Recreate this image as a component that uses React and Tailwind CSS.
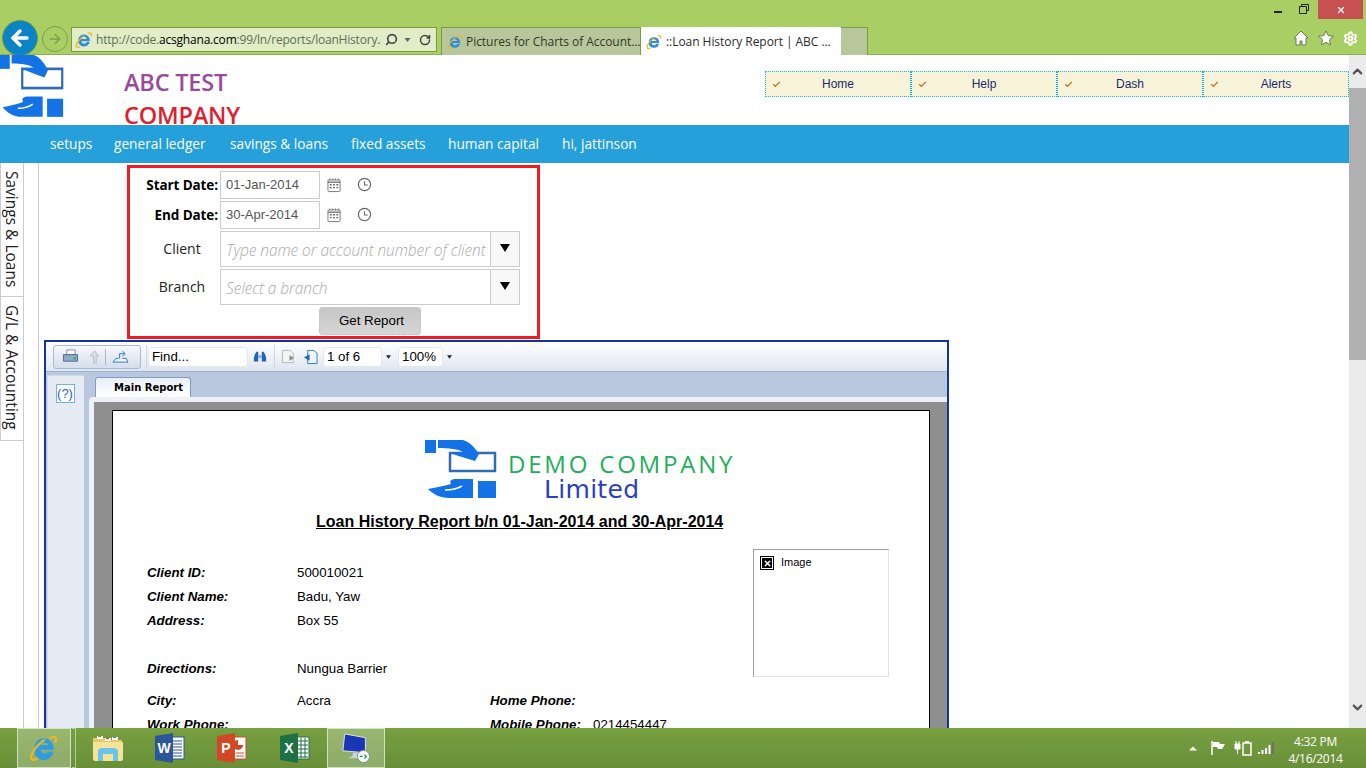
import React from 'react';
import { Settings, Check, Search, RotateCw, ArrowLeft, ArrowRight, X, ChevronUp, ChevronDown } from 'lucide-react';

const navItems = [
  { label: 'setups', cls: 'w-[64px]' },
  { label: 'general ledger', cls: 'w-[116px]' },
  { label: 'savings & loans', cls: 'w-[121px]' },
  { label: 'fixed assets', cls: 'w-[97px]' },
  { label: 'human capital', cls: 'w-[114px]' },
  { label: 'hi, jattinson', cls: 'w-[90px]' },
];

const detailRows = [
  { label: 'Client ID:', value: '500010021', cls: 'h-[24px]' },
  { label: 'Client Name:', value: 'Badu, Yaw', cls: 'h-[24px]' },
  { label: 'Address:', value: 'Box 55', cls: 'h-[48px]' },
  { label: 'Directions:', value: 'Nungua Barrier', cls: 'h-[32px]' },
];

function IeIcon({ className }) {
  return (
    <svg viewBox="0 0 20 20" className={className}>
      <path d="M3.5 10.5a6.5 6.5 0 0 1 12.9-1.2l.1 2H7a3.2 3.2 0 0 0 6 1h3.3a6.5 6.5 0 0 1-12.8-1.8z M7 8.8h6a3.1 3.1 0 0 0-6 0z" fill="#2f8fdc" fillRule="evenodd" />
      <path d="M15 2.5c2.5-1.2 4 0 2.8 3M5 17.5c-2.8 1.5-4.5.3-3.3-2.8 1.1-2.8 4-6 8-9" fill="none" stroke="#f2b51d" strokeWidth="1.5" strokeLinecap="round" />
    </svg>
  );
}

// hands and box logo, used in the header and on the report
function HandsLogo({ className }) {
  return (
    <svg viewBox="0 0 72 60" preserveAspectRatio="none" className={className}>
      <rect x="0" y="0" width="11" height="13" fill="#1272e6" />
      <rect x="25" y="13" width="45" height="18" fill="#fff" stroke="#2f6cb5" strokeWidth="2.5" />
      <path d="M13 0H38C45 2 50 8 54 14L50 21L37 17C31 15 27 14 24 12C30 13 35 13 38 12C33 9 24 8 13 8Z" fill="#1272e6" />
      <path d="M3 49C12 47 20 46 26 44C24 41 26 39 32 39H48V58H24C15 58 8 54 3 49Z" fill="#1272e6" />
      <path d="M20 50C26 50 32 49 37 46" fill="none" stroke="#fff" strokeWidth="1.5" />
      <rect x="53" y="41" width="18" height="17" fill="#1272e6" />
    </svg>
  );
}

function CalendarIcon() {
  return (
    <svg viewBox="0 0 16 16" className="w-[15px] h-[16px]">
      <rect x="1" y="2.5" width="13" height="12.5" rx="1" fill="#fff" stroke="#777" />
      <path d="M1 5h13" stroke="#777" strokeWidth="1.5" />
      <path d="M3 1v2M6 1v2M9 1v2M12 1v2" stroke="#777" />
      <path d="M3 7h2v1.5H3zM6.5 7h2v1.5h-2zM10 7h2v1.5h-2zM3 10h2v1.5H3zM6.5 10h2v1.5h-2zM10 10h2v1.5h-2z" fill="#666" />
    </svg>
  );
}

function ClockIcon() {
  return (
    <svg viewBox="0 0 16 16" className="w-[15px] h-[15px]">
      <circle cx="8" cy="8" r="6.5" fill="none" stroke="#666" strokeWidth="1.3" />
      <path d="M8 4.5V8.5H11.5" fill="none" stroke="#666" strokeWidth="1.1" />
    </svg>
  );
}

function DropArrow() {
  return (
    <div className="w-[29px] h-full border-l border-[#cccccc] bg-[#f8f8f8] flex items-center justify-center pb-[2px]">
      <svg viewBox="0 0 10 8" className="w-[10px] h-[8px]"><path d="M0 0h10L5 8z" fill="#000" /></svg>
    </div>
  );
}

function DateRow({ label, value }) {
  return (
    <div className="flex items-center h-[28px]">
      <div className="w-[90px] text-right font-['Open_Sans',sans-serif] font-bold text-[13.5px] text-black pr-[2px] tracking-[-0.1px]">{label}</div>
      <div className="w-[100px] h-[28px] border border-[#cccccc] flex items-center pl-[5px] font-['Liberation_Sans',sans-serif] text-[13px] text-[#555555] pb-[1px]">{value}</div>
      <div className="ml-[7px] pb-[1px]"><CalendarIcon /></div>
      <div className="ml-[15px] pb-[2px]"><ClockIcon /></div>
    </div>
  );
}

function ComboRow({ label, placeholder }) {
  return (
    <div className="flex h-[36px]">
      <div className="w-[90px] flex justify-center pl-[14px] pt-[7px] font-['Open_Sans',sans-serif] text-[14px] text-[#222222]">{label}</div>
      <div className="w-[300px] border border-[#cccccc] flex">
        <div className="flex-1 pl-[5px] pt-[8px] font-['Open_Sans',sans-serif] italic font-light text-[15.5px] text-[#aaaaaa] tracking-[-0.1px] leading-[20px] whitespace-nowrap overflow-hidden">{placeholder}</div>
        <DropArrow />
      </div>
    </div>
  );
}

function ToolbarInput({ children, widthCls }) {
  return (
    <div className={`${widthCls} h-[20px] rounded-[4px] bg-white border border-[#e3e8f0] flex items-center pl-[3px] font-['Liberation_Sans',sans-serif] text-[13.3px] text-black`}>
      {children}
    </div>
  );
}

function SmallCaret() {
  return <svg viewBox="0 0 6 4" className="w-[5px] h-[4px]"><path d="M0 0h6L3 4z" fill="#222" /></svg>;
}

function TaskbarApp({ children, active, widthCls }) {
  return (
    <div className={`${widthCls} h-full flex items-center justify-center ${active ? 'bg-white/25 border border-white/60' : ''}`}>
      {children}
    </div>
  );
}

function OfficeIcon({ color, letter, children }) {
  return (
    <svg viewBox="0 0 30 30" className="w-[30px] h-[30px]">
      <path d="M12 4h17v22H12z" fill="#fff" stroke={color} />
      {children}
      <path d="M0 3l18-3v30L0 27z" fill={color} />
      <text x="9" y="20" textAnchor="middle" fontFamily="Liberation Sans, sans-serif" fontWeight="700" fontSize="14" fill="#fff">{letter}</text>
    </svg>
  );
}

function ReportViewer() {
  return (
    <div className="ml-[5px] mt-[1px] w-[905px] flex-1 min-h-0 border-[2px] border-b-0 border-[#12349c] bg-[#c3cfe2] flex flex-col overflow-hidden">
      {/* toolbar */}
      <div className="h-[30px] shrink-0 bg-gradient-to-b from-white to-[#dfe6f1] flex items-center pl-[7px] border-b border-[#9fb0cc]">
        <div className="w-[88px] h-[24px] rounded-[3px] border border-[#a7bbd6] bg-gradient-to-b from-[#f6f8fb] to-[#d5deeb] flex items-center pl-[8px]">
          <svg viewBox="0 0 18 16" className="w-[17px] h-[15px]">
            <path d="M5 1h9v5H5z" fill="#fff" stroke="#7d8ea5" />
            <path d="M1.5 6h15v7h-15z" fill="#8fa9c8" stroke="#4c6c92" />
            <rect x="12" y="9" width="3" height="2" fill="#3fa34d" />
          </svg>
          <svg viewBox="0 0 12 16" className="w-[11px] h-[14px] ml-[10px]"><path d="M6 1l5 6H8v8H5V7H1z" fill="#d9dee4" stroke="#b3bbc4" /></svg>
          <div className="w-px h-[16px] bg-[#aab7c8] ml-[5px]" />
          <svg viewBox="0 0 18 16" className="w-[17px] h-[15px] ml-[6px]">
            <path d="M1 14h16l-2-4h-4M7 10H4L1 14" fill="#eef5fc" stroke="#2a79c9" />
            <path d="M8 10V5h5M11 2.5L14 5l-3 2.5" fill="none" stroke="#2a79c9" />
          </svg>
        </div>
        <div className="w-px h-[24px] bg-[#cfd7e3] ml-[5px] mr-[1px]" />
        <ToolbarInput widthCls="w-[100px]">Find...</ToolbarInput>
        <svg viewBox="0 0 16 14" className="w-[14px] h-[14px] ml-[5px]">
          <path d="M2 4l2-3h2v11H1V8zM14 4l-2-3h-2v11h5V8z" fill="#2266b8" />
          <path d="M6 5h4v3H6z" fill="#7fa9d8" />
        </svg>
        <div className="w-px h-[24px] bg-[#cfd7e3] mx-[7px]" />
        <svg viewBox="0 0 16 16" className="w-[15px] h-[16px] -ml-px">
          <path d="M1.5 1H10l3 3v10H1.5z" fill="#f4f4f4" stroke="#b5b5b5" />
          <path d="M9 6l5 3-5 3z" fill="#8a8a8a" />
        </svg>
        <svg viewBox="0 0 16 16" className="w-[15px] h-[16px] ml-[7px]">
          <path d="M5 1h6.5L15 4v11H5z" fill="#eef5fc" stroke="#2a79c9" />
          <path d="M7 5L1 8.5 7 12z" fill="#1f66b8" />
        </svg>
        <div className="ml-[5px]"><ToolbarInput widthCls="w-[59px]">1 of 6</ToolbarInput></div>
        <div className="ml-[4px] mr-[7px]"><SmallCaret /></div>
        <ToolbarInput widthCls="w-[45px]">100%</ToolbarInput>
        <div className="ml-[4px]"><SmallCaret /></div>
      </div>

      <div className="flex-1 min-h-0 flex pt-[3px] bg-[#b9c8de]">
        {/* help strip */}
        <div className="w-[37px] ml-[1px] shrink-0 bg-[#e6ebf3] border-t border-l border-[#d0d8e5] pt-[8px] pr-[2px] flex justify-center">
          <div className="w-[19px] h-[19px] border border-[#6fb2f2] bg-white text-[#2a5fd0] flex items-center justify-center font-['Liberation_Sans',sans-serif] text-[13px]">(?)</div>
        </div>

        <div className="flex-1 min-w-0 pl-[5px] flex flex-col">
          {/* tab strip */}
          <div className="h-[22px] shrink-0 pl-[6px] pt-[2px]">
            <div className="w-[96px] h-[20px] rounded-t-[3px] border border-b-0 border-[#7f9cc6] bg-gradient-to-b from-[#e9eef6] to-white flex items-center justify-end pr-[7px] font-['DejaVu_Sans',sans-serif] font-bold text-[10px] text-black">Main Report</div>
          </div>
          {/* report page */}
          <div className="flex-1 min-h-0 bg-[#eef2f7] rounded-tl-[4px] pt-[5px] pl-[5px]">
            <div className="h-full bg-[#8f8f8f] pt-[8px] pl-[18px] pr-[17px]">
              <ReportPage />
            </div>
          </div>
        </div>
      </div>
    </div>
  );
}

function ReportPage() {
  return (
    <div className="h-full border border-b-0 border-black bg-white overflow-hidden font-['Liberation_Sans',sans-serif] text-black">
      {/* company logo */}
      <div className="h-[62px] mt-[29px] ml-[312px] flex">
        <HandsLogo className="w-[72px] h-[60px]" />
        <div className="ml-[11px] pt-[11px]">
          <div className="font-['Open_Sans',sans-serif] font-medium text-[24px] leading-[26px] text-[#1fae5a] whitespace-nowrap tracking-[2.8px]">DEMO COMPANY</div>
          <div className="font-['DejaVu_Sans',sans-serif] text-[25px] leading-[26px] text-[#2b3fbf] ml-[36px] tracking-[0.3px]">Limited</div>
        </div>
      </div>
      <div className="mt-[10px] ml-[203px] font-bold text-[16px] leading-[20px] underline whitespace-nowrap">Loan History Report b/n 01-Jan-2014 and 30-Apr-2014</div>

      <div className="flex mt-[17px]">
        <div className="w-[640px] pl-[34px] pt-[16px] text-[13.3px] leading-[16px]">
          {detailRows.map((row) => (
            <div key={row.label} className={`flex ${row.cls}`}>
              <div className="w-[150px] font-bold italic">{row.label}</div>
              <div>{row.value}</div>
            </div>
          ))}
          <div className="flex h-[24px]">
            <div className="w-[150px] font-bold italic">City:</div>
            <div className="w-[193px]">Accra</div>
            <div className="font-bold italic">Home Phone:</div>
          </div>
          <div className="flex h-[24px]">
            <div className="w-[150px] font-bold italic">Work Phone:</div>
            <div className="w-[193px]" />
            <div className="w-[103px] font-bold italic">Mobile Phone:</div>
            <div>0214454447</div>
          </div>
        </div>
        <div className="w-[136px] h-[128px] border border-[#e2e2e2] border-t-[#a0a0a0] border-l-[#a0a0a0] pt-[6px] pl-[6px] flex items-start gap-[7px]">
          <div className="w-[14px] h-[14px] border border-black p-px">
            <div className="w-full h-full bg-black text-white flex items-center justify-center"><X className="w-[9px] h-[9px]" strokeWidth={4} /></div>
          </div>
          <div className="text-[11px] leading-[12px]">Image</div>
        </div>
      </div>
    </div>
  );
}

export default function App() {
  return (
    <div className="w-[1366px] h-[768px] flex flex-col overflow-hidden bg-white">
      {/* browser chrome */}
      <div className="h-[55px] shrink-0 bg-[#a9cf64] border-b border-[#8fae55] flex flex-col">
        <div className="h-[19px] shrink-0 flex justify-end pr-[3px]">
          <div className="w-[8px] h-[2px] mt-[11px] mr-[17px] bg-[#222]" />
          <div className="mt-[4px] mr-[9px]">
            <svg viewBox="0 0 10 10" className="w-[10px] h-[10px]"><path d="M2.5 2.5V.5h7v6h-2M.5 2.5h7v7h-7z" fill="none" stroke="#222" /></svg>
          </div>
          <div className="w-[45px] bg-[#c75050] flex items-center justify-center"><X className="w-[10px] h-[10px] text-white" strokeWidth={3} /></div>
        </div>
        <div className="flex-1 min-h-0 flex items-start">
          <div className="w-[36px] h-[36px] mt-[1px] ml-[2px] shrink-0 rounded-full bg-[#0a84c4] border border-[#6f9a3a] flex items-center justify-center">
            <ArrowLeft className="w-[24px] h-[24px] text-white" strokeWidth={3.5} />
          </div>
          <div className="w-[26px] h-[26px] mt-[7px] ml-[4px] rounded-full border border-[#7f9f45] flex items-center justify-center">
            <ArrowRight className="w-[16px] h-[16px] text-[#7f9f45]" strokeWidth={2} />
          </div>
          <div className="w-[366px] h-[25px] mt-[8px] ml-[3px] bg-[#e0edc6] border border-[#7d9a45] flex items-center pl-[3px]">
            <IeIcon className="w-[18px] h-[18px] shrink-0" />
            <div className="ml-[3px] w-[285px] overflow-hidden whitespace-nowrap font-['Open_Sans',sans-serif] text-[12px] text-[#5f6f55] tracking-[-0.2px]">http://code.<span className="text-black">acsghana.com</span>:99/ln/reports/loanHistory.aspx</div>
            <Search className="w-[13px] h-[13px] ml-[4px] text-[#444] -scale-x-100" strokeWidth={3} />
            <svg viewBox="0 0 6 4" className="w-[7px] h-[4px] ml-[6px]"><path d="M0 0h6L3 4z" fill="#666" /></svg>
            <RotateCw className="w-[12px] h-[12px] ml-[8px] text-[#444]" strokeWidth={3} />
          </div>
          <div className="flex h-[28px] mt-[8px] ml-[4px] font-['Open_Sans',sans-serif] text-[12px] tracking-[-0.05px]">
            <div className="w-[200px] bg-[#b7c79b] border border-b-0 border-[#7d9a45] flex items-center pl-[5px] pt-[1px] gap-[3px] text-[#2f3a26]">
              <IeIcon className="w-[16px] h-[16px] shrink-0" />
              <span className="whitespace-nowrap">Pictures for Charts of Account...</span>
            </div>
            <div className="w-[200px] bg-white flex items-center pl-[5px] pt-[1px] gap-[4px] text-[#2b2b2b]">
              <IeIcon className="w-[16px] h-[16px] shrink-0" />
              <span className="whitespace-nowrap">::Loan History Report | ABC ...</span>
              <X className="w-[10px] h-[10px] ml-[5px] text-[#9a9a9a]" strokeWidth={3.5} />
            </div>
            <div className="w-[27px] bg-[#b7c79b] border border-b-0 border-l-0 border-[#7d9a45]" />
          </div>
          <div className="flex-1 flex justify-end items-center gap-[9px] pr-[8px] mt-[11px]">
            <svg viewBox="0 0 16 16" className="w-[16px] h-[16px]"><path d="M8 1L1 8h2v7h4v-4h2v4h4V8h2z" fill="#fff" stroke="#6a7a55" /></svg>
            <svg viewBox="0 0 16 16" className="w-[16px] h-[16px]"><path d="M8 .8l2.2 4.8 5.1.6-3.800 3.500 1 5.100L8 12.300l-4.500 2.500 1-5.100L.7 6.200l5.100-.6z" fill="#fff" stroke="#6a7a55" /></svg>
            <Settings className="w-[15px] h-[15px] text-white" strokeWidth={3} />
          </div>
        </div>
      </div>

      {/* page area with the browser scrollbar */}
      <div className="flex-1 min-h-0 flex">
        <div className="flex-1 min-w-0 flex flex-col">
          {/* site header */}
          <div className="h-[70px] shrink-0 flex">
            <HandsLogo className="w-[64px] h-[64px] shrink-0" />
            <div className="w-[701px] shrink-0 pl-[60px] pt-[11px] font-['Open_Sans',sans-serif] font-semibold text-[23.5px] leading-[33px] tracking-[-0.2px]">
              <div className="text-[#9b4a9b]">ABC TEST</div>
              <div className="text-[#e0202f]">COMPANY</div>
            </div>
            <div className="mt-[16px] h-[26px] flex-1 flex font-['Liberation_Sans',sans-serif] text-[12px] text-[#1b2a6b]">
              {['Home', 'Help', 'Dash', 'Alerts'].map((item) => (
                <div key={item} className="flex-1 flex items-center bg-[#f7f3d9] border border-dotted border-[#12b5ea] pl-[6px]">
                  <Check className="w-[9px] h-[9px] text-[#c0700a]" strokeWidth={3} />
                  <span className="flex-1 text-center pr-[15px]">{item}</span>
                </div>
              ))}
            </div>
          </div>

          {/* nav bar */}
          <div className="h-[38px] shrink-0 bg-[#25a0da] flex items-center pl-[50px] font-['Open_Sans',sans-serif] text-[13.7px] leading-[20px] text-white">
            {navItems.map((item) => (
              <div key={item.label} className={`${item.cls} whitespace-nowrap -mt-px`}>{item.label}</div>
            ))}
          </div>

          <div className="flex-1 min-h-0 flex">
            {/* side tabs */}
            <div className="w-[24px] shrink-0 border-r border-[#cccccc] flex flex-col font-['Open_Sans',sans-serif] text-[15.5px] leading-[20px] text-[#222222]">
              <div className="h-[134px] border-b border-l border-[#cccccc] flex items-center pt-[8px] [writing-mode:vertical-rl] whitespace-nowrap">Savings &amp; Loans</div>
              <div className="h-[144px] border-b border-l border-[#cccccc] flex items-center pt-[8px] [writing-mode:vertical-rl] whitespace-nowrap">G/L &amp; Accounting</div>
            </div>
            <div className="w-[15px] shrink-0 border-r border-[#cccccc]" />

            <div className="flex-1 min-w-0 flex flex-col">
              {/* filter form */}
              <div className="ml-[88px] mt-[2px] w-[413px] h-[174px] shrink-0 border-[3px] border-[#ee1c25] bg-white pt-[3px] flex flex-col gap-[2px]">
                <DateRow label="Start Date:" value="01-Jan-2014" />
                <DateRow label="End Date:" value="30-Apr-2014" />
                <ComboRow label="Client" placeholder="Type name or account number of client" />
                <ComboRow label="Branch" placeholder="Select a branch" />
                <div className="ml-[189px] w-[102px] h-[28px] rounded-[3px] bg-gradient-to-b from-[#c6c6c6] to-[#d6d6d6] border border-[#c8c8c8] flex items-center justify-center pl-[3px] font-['Liberation_Sans',sans-serif] text-[13.3px] text-black">Get Report</div>
              </div>
              <ReportViewer />
            </div>
          </div>
        </div>

        {/* scrollbar */}
        <div className="w-[17px] shrink-0 bg-[#ebebeb] flex flex-col">
          <div className="h-[33px] flex items-center justify-center"><ChevronUp className="w-[15px] h-[15px] text-[#555]" strokeWidth={3.5} /></div>
          <div className="h-[272px] bg-[#b0b0b0]" />
          <div className="flex-1 flex items-end justify-center pb-[13px]"><ChevronDown className="w-[15px] h-[15px] text-[#555]" strokeWidth={3.5} /></div>
        </div>
      </div>

      {/* taskbar */}
      <div className="h-[40px] shrink-0 bg-gradient-to-b from-[#77a040] to-[#688f38] flex items-center">
        <div className="flex h-full items-center ml-[17px]">
          <TaskbarApp active widthCls="w-[54px]">
            <svg viewBox="0 0 34 34" className="w-[30px] h-[30px]">
              <path d="M6 18a11 11 0 0 1 22-2v3H13a5 5 0 0 0 9 2h6a11 11 0 0 1-22-3z M13 14h9a5 5 0 0 0-9 0z" fill="#2f9be0" fillRule="evenodd" />
              <path d="M24 6c5-3 8-2 6 4M9 29c-5 3-8 1-6-4 2-6 7-12 14-17" fill="none" stroke="#f2b51d" strokeWidth="2.5" strokeLinecap="round" />
            </svg>
          </TaskbarApp>
          <div className="w-[4px] h-full ml-[1px] border-r border-y border-white/50" />
          <TaskbarApp widthCls="w-[63px]">
            <svg viewBox="0 0 32 28" className="w-[32px] h-[28px]">
              <path d="M1 4h12l2 2h15v12H1z" fill="#e8c96a" />
              <path d="M1 8h30v17a2 2 0 0 1-2 2H3a2 2 0 0 1-2-2z" fill="#f6e39a" />
              <path d="M5 2h6v3H5zM13 4h6v3h-6zM20 3h6v3h-6z" fill="#fff" />
              <path d="M6 2h3v1H6z" fill="#3ca34a" /><path d="M14 4h3v1h-3z" fill="#d33" /><path d="M21 3h3v1h-3z" fill="#38c" />
              <path d="M6 27v-9c0-3 2-4 4-4h12c2 0 4 1 4 4v9h-5v-7H11v7z" fill="#6cc4ee" />
            </svg>
          </TaskbarApp>
          <TaskbarApp widthCls="w-[62px]">
            <OfficeIcon color="#2b579a" letter="W">
              <path d="M15 8h12M15 11h12M15 14h12M15 17h12M15 20h12M15 23h12" stroke="#2b579a" />
            </OfficeIcon>
          </TaskbarApp>
          <TaskbarApp widthCls="w-[62px]">
            <OfficeIcon color="#d24726" letter="P">
              <path d="M21 7a5 5 0 1 0 5 5h-5z" fill="#d24726" />
              <path d="M19 20h8M19 23h8" stroke="#d24726" />
            </OfficeIcon>
          </TaskbarApp>
          <TaskbarApp widthCls="w-[64px]">
            <OfficeIcon color="#1e7145" letter="X">
              <path d="M17 8h11M17 12h11M17 16h11M17 20h11M17 24h11M21 5v20M25 5v20" stroke="#1e7145" />
            </OfficeIcon>
          </TaskbarApp>
          <TaskbarApp active widthCls="w-[58px]">
            <svg viewBox="0 0 34 32" className="w-[32px] h-[30px]">
              <path d="M5 1l22 4v16L3 19z" fill="#1a35b5" stroke="#dfe6f1" />
              <path d="M14 21l-1 4-5 2h15l-3-3v-3z" fill="#c9d3de" />
              <circle cx="25" cy="25" r="6.5" fill="#f3f5f7" stroke="#7d8f9f" />
              <path d="M21 25h3M26 23l2 2-2 2" stroke="#2c8a3c" strokeWidth="1.3" fill="none" />
            </svg>
          </TaskbarApp>
        </div>

        <div className="flex-1 flex items-center justify-end pr-[20px] h-full">
          <svg viewBox="0 0 8 4" className="w-[8px] h-[5px] mr-[13px]"><path d="M0 4l4-4 4 4z" fill="#fff" /></svg>
          <svg viewBox="0 0 16 16" className="w-[16px] h-[16px] mr-[8px]"><path d="M2 1v14" stroke="#fff" strokeWidth="1.5" /><path d="M3 2h6l1 2h5l-3 5H8L7 7H3z" fill="#fff" /></svg>
          <svg viewBox="0 0 18 16" className="w-[18px] h-[16px] mr-[6px]">
            <path d="M1 4h5v5H1zM3.5 9v5M2 1v3M5 1v3" stroke="#fff" fill="#fff" />
            <rect x="9" y="3" width="8" height="12" fill="none" stroke="#fff" strokeWidth="1.5" />
            <rect x="11" y="1" width="4" height="2" fill="#fff" />
          </svg>
          <svg viewBox="0 0 16 12" className="w-[16px] h-[12px]">
            <path d="M0 10h2v2H0zM3.5 8h2v4h-2zM7 6h2v6H7zM10.5 3h2v9h-2z" fill="#fff" />
            <path d="M13.5 0H16v12h-2.5z" fill="#6e7468" />
          </svg>
          <div className="ml-[11px] w-[61px] pt-[4px] text-center font-['Open_Sans',sans-serif] text-[12px] leading-[17px] text-white whitespace-nowrap tracking-[-0.3px]">
            <div>4:32 PM</div>
            <div>4/16/2014</div>
          </div>
        </div>
      </div>
    </div>
  );
}
